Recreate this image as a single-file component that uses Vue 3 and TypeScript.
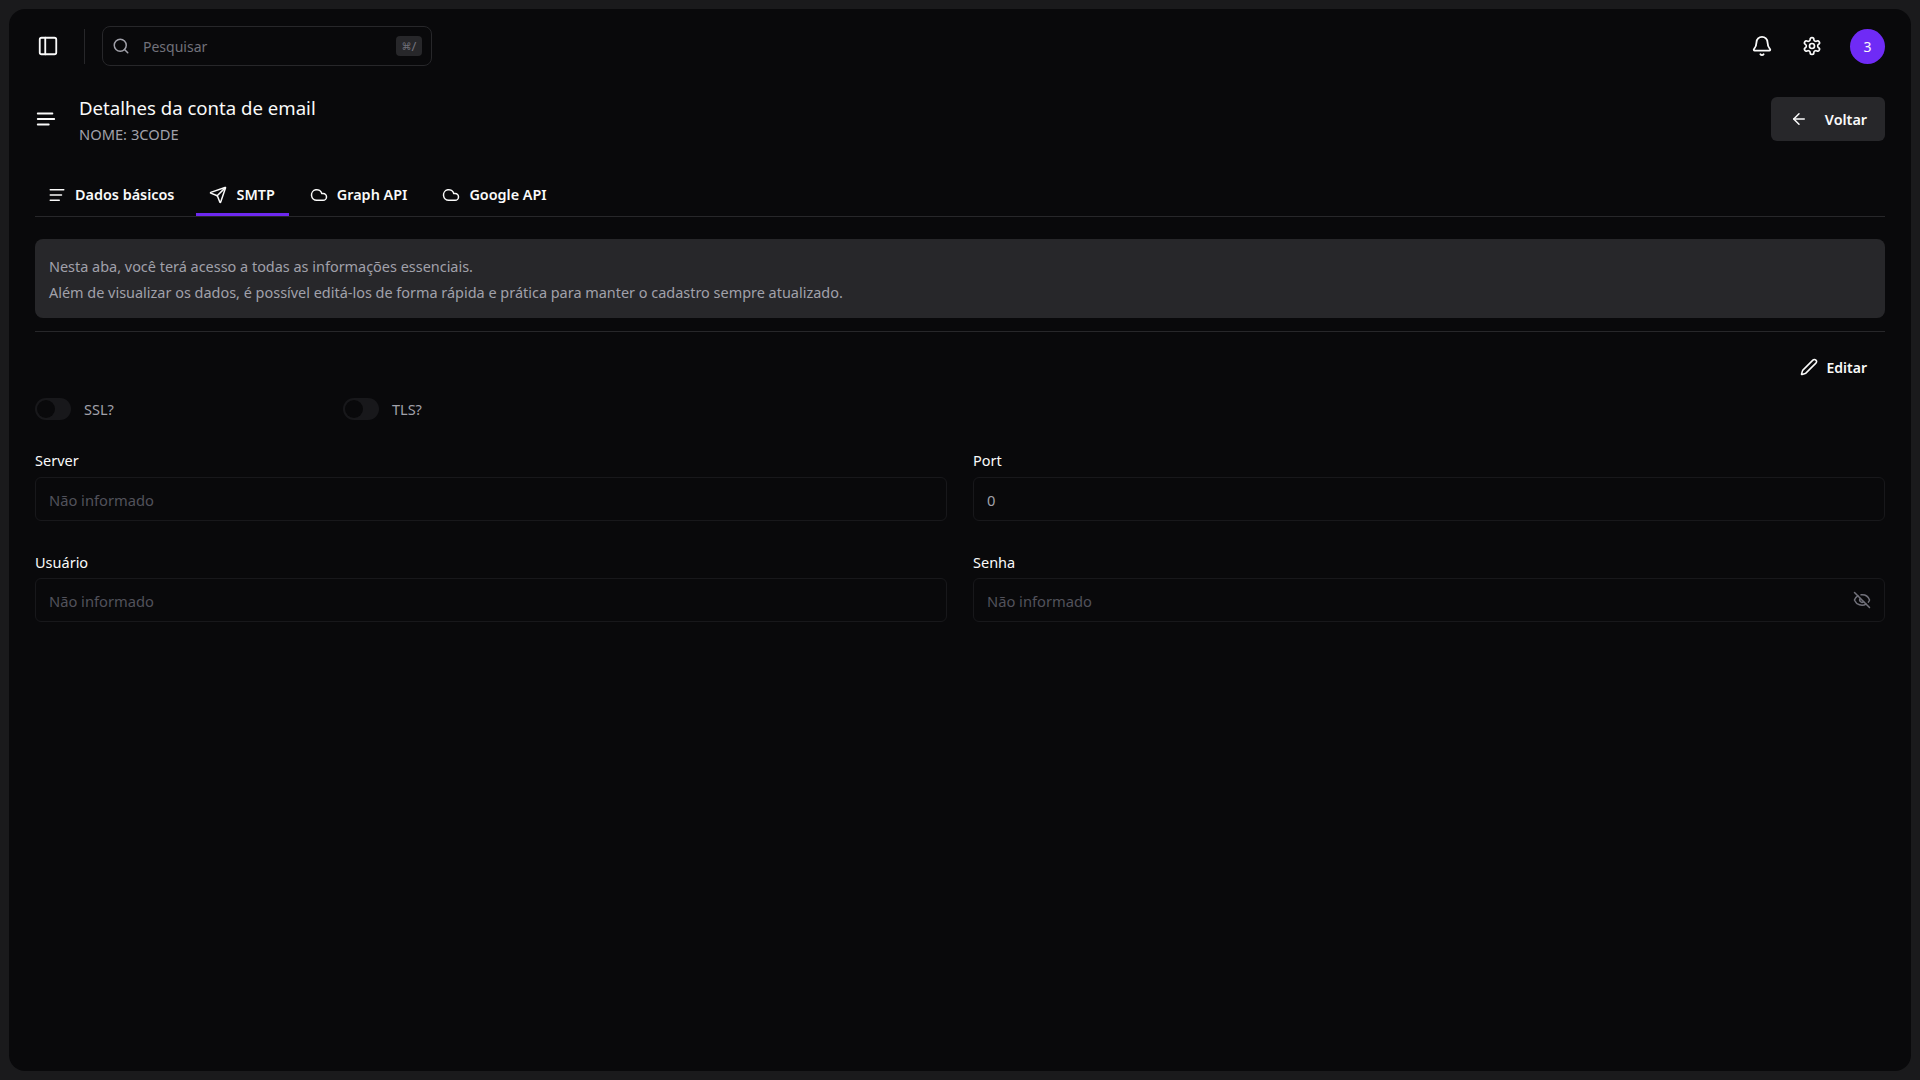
<script setup lang="ts">
const tabs = [
  { label: 'Dados básicos', icon: 'text', active: false },
  { label: 'SMTP', icon: 'send', active: true },
  { label: 'Graph API', icon: 'cloud', active: false },
  { label: 'Google API', icon: 'cloud', active: false },
]
</script>

<template>
  <div class="shell">
    <main class="panel">
      <header class="topbar">
        <button class="icon-btn side-toggle" aria-label="menu">
          <svg width="22" height="22" viewBox="0 0 24 24" fill="none" stroke="currentColor" stroke-width="2" stroke-linecap="round" stroke-linejoin="round"><rect x="3" y="3" width="18" height="18" rx="2"/><path d="M9 3v18"/></svg>
        </button>
        <span class="vdiv"></span>
        <div class="search">
          <svg width="18" height="18" viewBox="0 0 24 24" fill="none" stroke="#a1a1aa" stroke-width="2" stroke-linecap="round" stroke-linejoin="round"><circle cx="11" cy="11" r="8"/><path d="m21 21-4.3-4.3"/></svg>
          <span class="search-text">Pesquisar</span>
          <kbd class="kbd"><span class="cmd">⌘</span>/</kbd>
        </div>
        <div class="top-actions">
          <svg class="bell" width="22" height="22" viewBox="0 0 24 24" fill="none" stroke="currentColor" stroke-width="2" stroke-linecap="round" stroke-linejoin="round"><path d="M10.268 21a2 2 0 0 0 3.464 0"/><path d="M3.262 15.326A1 1 0 0 0 4 17h16a1 1 0 0 0 .74-1.673C19.41 13.956 18 12.499 18 8A6 6 0 0 0 6 8c0 4.499-1.411 5.956-2.738 7.326"/></svg>
          <svg class="gear" width="20" height="20" viewBox="0 0 24 24" fill="none" stroke="currentColor" stroke-width="2" stroke-linecap="round" stroke-linejoin="round"><path d="M12.22 2h-.44a2 2 0 0 0-2 2v.18a2 2 0 0 1-1 1.73l-.43.25a2 2 0 0 1-2 0l-.15-.08a2 2 0 0 0-2.73.73l-.22.38a2 2 0 0 0 .73 2.73l.15.1a2 2 0 0 1 1 1.72v.51a2 2 0 0 1-1 1.74l-.15.09a2 2 0 0 0-.73 2.73l.22.38a2 2 0 0 0 2.73.73l.15-.08a2 2 0 0 1 2 0l.43.25a2 2 0 0 1 1 1.73V20a2 2 0 0 0 2 2h.44a2 2 0 0 0 2-2v-.18a2 2 0 0 1 1-1.73l.43-.25a2 2 0 0 1 2 0l.15.08a2 2 0 0 0 2.73-.73l.22-.39a2 2 0 0 0-.73-2.73l-.15-.08a2 2 0 0 1-1-1.74v-.5a2 2 0 0 1 1-1.74l.15-.09a2 2 0 0 0 .73-2.73l-.22-.38a2 2 0 0 0-2.73-.73l-.15.08a2 2 0 0 1-2 0l-.43-.25a2 2 0 0 1-1-1.73V4a2 2 0 0 0-2-2z"/><circle cx="12" cy="12" r="3"/></svg>
          <span class="avatar">3</span>
        </div>
      </header>

      <section class="page">
        <div class="title-row">
          <svg class="title-icon" width="22" height="22" viewBox="0 0 24 24" fill="none" stroke="currentColor" stroke-width="2" stroke-linecap="round" stroke-linejoin="round"><path d="M3 6h16M3 12h18M3 18h12"/></svg>
          <div class="title-text">
            <h1>Detalhes da conta de email</h1>
            <p>NOME: 3CODE</p>
          </div>
          <button class="back-btn">
            <svg width="18" height="18" viewBox="0 0 24 24" fill="none" stroke="currentColor" stroke-width="2" stroke-linecap="round" stroke-linejoin="round"><path d="m12 19-7-7 7-7"/><path d="M19 12H5"/></svg>
            <span>Voltar</span>
          </button>
        </div>

        <nav class="tabs">
          <div v-for="tab in tabs" :key="tab.label" class="tab" :class="{ active: tab.active }">
            <svg v-if="tab.icon === 'text'" width="18" height="18" viewBox="0 0 24 24" fill="none" stroke="currentColor" stroke-width="2" stroke-linecap="round" stroke-linejoin="round"><path d="M3 5h18M3 12h15M3 19h12"/></svg>
            <svg v-else-if="tab.icon === 'send'" width="18" height="18" viewBox="0 0 24 24" fill="none" stroke="currentColor" stroke-width="2" stroke-linecap="round" stroke-linejoin="round"><path d="M14.536 21.686a.5.5 0 0 0 .937-.024l6.5-19a.496.496 0 0 0-.635-.635l-19 6.5a.5.5 0 0 0-.024.937l7.93 3.18a2 2 0 0 1 1.112 1.11z"/><path d="m21.854 2.147-10.94 10.939"/></svg>
            <svg v-else width="18" height="18" viewBox="0 0 24 24" fill="none" stroke="currentColor" stroke-width="2" stroke-linecap="round" stroke-linejoin="round"><path d="M17.5 19H9a7 7 0 1 1 6.71-9h1.79a4.5 4.5 0 1 1 0 9Z"/></svg>
            <span>{{ tab.label }}</span>
          </div>
        </nav>

        <div class="notice">
          <p>Nesta aba, você terá acesso a todas as informações essenciais.</p>
          <p>Além de visualizar os dados, é possível editá-los de forma rápida e prática para manter o cadastro sempre atualizado.</p>
        </div>
        <div class="rule"></div>

        <div class="edit-row">
          <button class="edit-btn">
            <svg width="18" height="18" viewBox="0 0 24 24" fill="none" stroke="currentColor" stroke-width="2" stroke-linecap="round" stroke-linejoin="round"><path d="M21.174 6.812a1 1 0 0 0-3.986-3.987L3.842 16.174a2 2 0 0 0-.5.83l-1.321 4.352a.5.5 0 0 0 .623.622l4.353-1.32a2 2 0 0 0 .83-.497z"/></svg>
            <span>Editar</span>
          </button>
        </div>

        <div class="switches">
          <label class="switch-item"><span class="switch"><span class="thumb"></span></span><span>SSL?</span></label>
          <label class="switch-item"><span class="switch"><span class="thumb"></span></span><span>TLS?</span></label>
        </div>

        <div class="form">
          <div class="field">
            <span class="label">Server</span>
            <div class="input"><span class="ph">Não informado</span></div>
          </div>
          <div class="field">
            <span class="label">Port</span>
            <div class="input"><span class="val">0</span></div>
          </div>
          <div class="field">
            <span class="label">Usuário</span>
            <div class="input"><span class="ph">Não informado</span></div>
          </div>
          <div class="field">
            <span class="label">Senha</span>
            <div class="input">
              <span class="ph">Não informado</span>
              <svg class="eye" width="18" height="18" viewBox="0 0 24 24" fill="none" stroke="currentColor" stroke-width="2" stroke-linecap="round" stroke-linejoin="round"><path d="M10.733 5.076a10.744 10.744 0 0 1 11.205 6.575 1 1 0 0 1 0 .696 10.747 10.747 0 0 1-1.444 2.49"/><path d="M14.084 14.158a3 3 0 0 1-4.242-4.242"/><path d="M17.479 17.499a10.75 10.75 0 0 1-15.417-5.151 1 1 0 0 1 0-.696 10.75 10.75 0 0 1 4.446-5.143"/><path d="m2 2 20 20"/></svg>
            </div>
          </div>
        </div>
      </section>
    </main>
  </div>
</template>

<style>
html, body { margin: 0; background: #1a1a1c; }
</style>

<style scoped>
* { box-sizing: border-box; }
.shell {
  width: 1920px;
  height: 1080px;
  padding: 9px;
  background: #1a1a1c;
  font-family: "Noto Sans", sans-serif;
  font-size: 14.5px;
  color: #fafafa;
}
.panel {
  height: 100%;
  background: #09090b;
  border-radius: 16px;
  overflow: hidden;
}
.topbar {
  display: flex;
  align-items: center;
  height: 74px;
  padding: 0 26px;
}
.icon-btn {
  display: flex;
  align-items: center;
  justify-content: center;
  width: 26px;
  height: 26px;
  padding: 0;
  background: none;
  border: 0;
  color: #fafafa;
}
.vdiv {
  width: 1px;
  height: 35px;
  margin: 0 17px 0 23px;
  background: #27272a;
}
.search {
  display: flex;
  align-items: center;
  width: 330px;
  height: 40px;
  padding: 0 9px;
  border: 1px solid #27272a;
  border-radius: 8px;
  color: #71717a;
}
.search-text { margin-left: 13px; flex: 1; font-size: 14px; }
.kbd {
  display: flex;
  align-items: center;
  justify-content: center;
  width: 26px;
  height: 20px;
  background: #27272a;
  border-radius: 4px;
  font-family: "Noto Sans", sans-serif;
  font-size: 13px;
  color: #71717a;
}
.cmd { font-family: "DejaVu Sans", sans-serif; font-size: 10px; }
.top-actions {
  display: flex;
  align-items: center;
  margin-left: auto;
  color: #fafafa;
}
.gear { margin-left: 29px; }
.avatar {
  display: flex;
  align-items: center;
  justify-content: center;
  width: 35px;
  height: 35px;
  margin-left: 28px;
  border-radius: 50%;
  background: #6f2bf6;
  font-size: 14px;
}
.page { padding: 0 26px; }
.title-row {
  display: flex;
  align-items: center;
  height: 62px;
  margin-top: 5px;
}
.title-icon { flex: none; }
.title-text { margin-left: 22px; }
h1 {
  margin: 0;
  font-size: 18.6px;
  font-weight: 400;
  line-height: 28px;
}
.title-text p {
  margin: 2px 0 0;
  font-size: 14.7px;
  line-height: 20px;
  color: #a1a1aa;
}
.back-btn {
  display: flex;
  align-items: center;
  justify-content: center;
  gap: 17px;
  width: 114px;
  height: 44px;
  padding: 0 0 0 1px;
  margin-left: auto;
  background: #27272a;
  border: 0;
  border-radius: 6px;
  color: #fafafa;
  font: 600 14.4px "Noto Sans", sans-serif;
}
.tabs {
  display: flex;
  gap: 8px;
  margin-top: 19px;
  height: 48px;
  border-bottom: 1px solid #27272a;
}
.tab {
  display: flex;
  align-items: center;
  gap: 9px;
  height: 47px;
  padding: 7px 14px 0 13px;
  font-size: 14.4px;
  font-weight: 600;
  border-bottom: 3px solid transparent;
}
.tab.active { border-bottom-color: #6d28ef; }
.notice {
  margin-top: 22px;
  padding: 15px 14px 0;
  height: 79px;
  background: #27272a;
  border-radius: 8px;
  color: #a1a1aa;
  font-size: 14.45px;
}
.notice p { margin: 0; line-height: 26px; }
.rule {
  height: 1px;
  margin-top: 13px;
  background: #27272a;
}
.edit-row {
  display: flex;
  justify-content: flex-end;
  margin-top: 17px;
}
.edit-btn {
  display: flex;
  align-items: center;
  gap: 9px;
  height: 36px;
  padding: 0 18px 0 0;
  background: none;
  border: 0;
  color: #fafafa;
  font: 600 14px "Noto Sans", sans-serif;
}
.switches {
  display: flex;
  margin-top: 12px;
}
.switch-item {
  display: flex;
  align-items: center;
  gap: 13px;
  width: 308px;
  height: 24px;
  color: #a1a1aa;
}
.switch {
  display: block;
  width: 36px;
  height: 22px;
  padding: 2px;
  background: #18181b;
  border-radius: 11px;
}
.thumb {
  display: block;
  width: 18px;
  height: 18px;
  border-radius: 50%;
  background: #09090b;
}
.form {
  display: grid;
  grid-template-columns: 1fr 1fr;
  column-gap: 26px;
  row-gap: 31px;
  margin-top: 29px;
}
.field { display: flex; flex-direction: column; }
.label {
  height: 20px;
  margin-bottom: 7px;
  line-height: 20px;
  font-weight: 400;
  color: #fafafa;
}
.field:nth-child(n + 3) .label { margin-bottom: 6px; }
.input {
  display: flex;
  align-items: center;
  justify-content: space-between;
  height: 44px;
  padding: 1px 13px 0;
  border: 1px solid #18181b;
  border-radius: 6px;
  font-size: 14.7px;
}
.ph { color: #52525b; }
.val { color: #a1a1aa; }
.eye { color: #71717a; margin-top: -1px; }
</style>
